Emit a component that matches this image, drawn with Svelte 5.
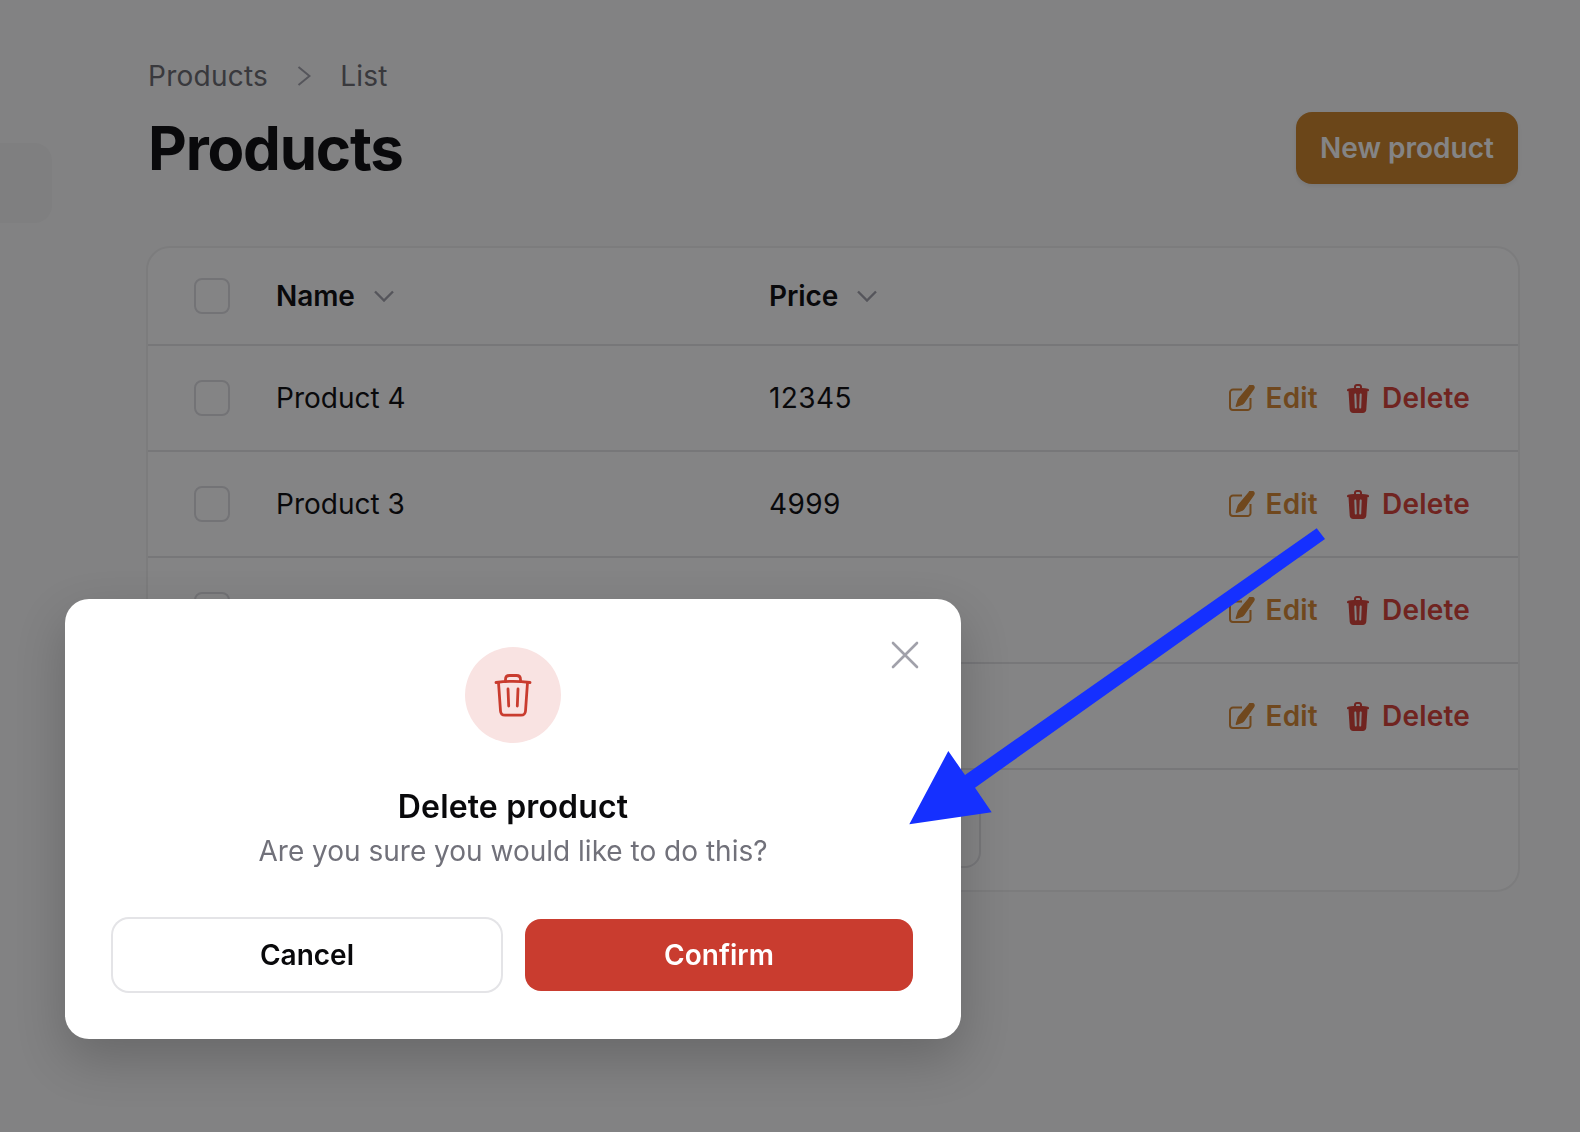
<script>
  const rows = [
    { name: 'Product 4', price: '12345' },
    { name: 'Product 3', price: '4999' },
    { name: 'Product 2', price: '2500' },
    { name: 'Product 1', price: '1000' }
  ];
</script>

<div class="page">
  <aside class="sidebar">
    <div class="toggle"></div>
  </aside>

  <main class="main">
    <nav class="crumbs">
      <span>Products</span>
      <svg class="crumb-sep" viewBox="0 0 14 20" fill="none" stroke="currentColor" stroke-width="2">
        <path d="M1.500 1l11 9-11 9" />
      </svg>
      <span>List</span>
    </nav>

    <header class="head">
      <h1>Products</h1>
      <button class="primary">New product</button>
    </header>

    <section class="card">
      <div class="row row-head">
        <span class="check"></span>
        <span class="col-name">Name
          <svg class="sort" viewBox="0 0 20 12" fill="none" stroke="currentColor" stroke-width="2.400"><path d="M1 1.500l9 9 9-9" /></svg>
        </span>
        <span class="col-price">Price
          <svg class="sort" viewBox="0 0 20 12" fill="none" stroke="currentColor" stroke-width="2.400"><path d="M1 1.500l9 9 9-9" /></svg>
        </span>
      </div>

      {#each rows as row}
        <div class="row">
          <span class="check"></span>
          <span class="col-name">{row.name}</span>
          <span class="col-price num">{row.price}</span>
          <span class="actions">
            <span class="action edit">
              <svg width="26" height="26" viewBox="0 0 26 26" fill="none">
                <path d="M13 4.500H4a3 3 0 0 0-3 3V22a3 3 0 0 0 3 3h14.500a3 3 0 0 0 3-3v-9" stroke="currentColor" stroke-width="2" />
                <path d="M19.500 1.200a3.100 3.100 0 0 1 5.800 2.900L15.300 18.300c-.4.600-1 1.100-1.700 1.400l-6 2.200c-.7.200-1.200-.3-1-1L8.500 15c.2-.6.500-1.200.9-1.700z" fill="currentColor" />
              </svg>
              Edit
            </span>
            <span class="action delete">
              <svg width="22" height="29" viewBox="0 0 22 29" fill="none">
                <path fill-rule="evenodd" d="M7 2.800C7 1.200 8.300 0 9.800 0h2.400C13.700 0 15 1.200 15 2.800V4c2.200.1 4.300.4 6 .8.600.1 1 .6 1 1.200v.4c0 .5-.4.900-.9.800l-.6-.1-1.200 18.700c-.1 1.800-1.600 3.200-3.400 3.200H6.100c-1.800 0-3.300-1.400-3.400-3.200L1.500 7.100l-.6.100C.4 7.300 0 6.900 0 6.400V6c0-.6.400-1.100 1-1.200 1.700-.4 3.800-.7 6-.8zM9 3.900h4V2.900c0-.5-.4-.9-.9-.9H9.900c-.5 0-.9.400-.9.900zM7.300 10.500l.5 13c0 .6.500 1 1 1s1-.5 1-1l-.5-13c0-.6-.5-1-1-1s-1 .5-1 1zm7.400 0c0-.6-.5-1-1-1s-1 .4-1 1l-.5 13c0 .5.400 1 1 1s1-.4 1-1z" fill="currentColor" />
              </svg>
              Delete
            </span>
          </span>
        </div>
      {/each}

      <footer class="foot">
        <div class="per-page"></div>
      </footer>
    </section>
  </main>
</div>

<div class="overlay"></div>

<div class="modal">
  <button class="close" aria-label="Close">
    <svg width="28" height="28" viewBox="0 0 28 28" fill="none" stroke="currentColor" stroke-width="2.600" stroke-linecap="round">
      <path d="M2 2l24 24M26 2L2 26" />
    </svg>
  </button>

  <div class="bubble">
    <svg width="48" height="48" viewBox="0 0 48 48" fill="none" stroke="currentColor" stroke-width="2.800" stroke-linecap="round" stroke-linejoin="round">
      <path d="M7 11.500c11-1.500 23-1.500 34 0" />
      <path d="M16.500 10.500V8.500C16.500 6 18 4.500 20.500 4.500h7C30 4.500 31.500 6 31.500 8.500v2" />
      <path d="M9.500 11.500l2 28.500c.2 2.500 2 4.200 4.500 4.200h16c2.500 0 4.300-1.700 4.500-4.200l2-28.500" />
      <path d="M19 18l.7 17M29 18l-.7 17" />
    </svg>
  </div>

  <h2>Delete product</h2>
  <p>Are you sure you would like to do this?</p>

  <div class="modal-actions">
    <button class="cancel">Cancel</button>
    <button class="confirm">Confirm</button>
  </div>
</div>

<svg class="arrow" width="1580" height="1132" viewBox="0 0 1580 1132">
  <polygon points="1316.700,528.300 1325,539 975,787.700 991.700,812.300 909.300,824.300 948.300,751 965,775" fill="#1530ff" />
</svg>

<style>
  :global(body) {
    margin: 0;
    background: #fafafa;
    font-family: Inter, "Liberation Sans", sans-serif;
  }

  .page {
    display: flex;
    min-height: 1132px;
    color: #09090b;
    background: #fafafa;
    font-size: 28px;
    line-height: 40px;
  }

  .sidebar {
    width: 146px;
    flex: none;
  }

  .toggle {
    width: 52px;
    height: 80px;
    margin-top: 143px;
    background: #f4f4f4;
    border-radius: 0 18px 18px 0;
  }

  .main {
    width: 1374px;
    padding-top: 56px;
  }

  .crumbs {
    display: flex;
    align-items: center;
    gap: 29px;
    padding-left: 2px;
    color: #68686f;
    letter-spacing: 0.25px;
  }

  .crumb-sep {
    width: 14px;
    height: 20px;
    color: #a1a1aa;
  }

  .head {
    display: flex;
    align-items: center;
    justify-content: space-between;
    margin-top: 16px;
    padding: 0 2px;
  }

  h1 {
    margin: 0;
    font-size: 60px;
    line-height: 72px;
    font-weight: 700;
    letter-spacing: -1.200px;
  }

  button {
    font-family: inherit;
    font-size: 28px;
    font-weight: 600;
    line-height: 40px;
    border: none;
    cursor: pointer;
  }

  .primary {
    width: 222px;
    height: 72px;
    color: #fff;
    background: #cc8227;
    border-radius: 16px;
    box-shadow: 0 2px 4px rgba(0, 0, 0, 0.08);
  }

  .card {
    margin-top: 62px;
    background: #fff;
    border: 2px solid #eeeeef;
    border-radius: 24px;
    box-sizing: border-box;
    height: 646px;
    overflow: hidden;
  }

  .row {
    display: flex;
    align-items: center;
    height: 106px;
    box-sizing: border-box;
    padding: 0 48px 0 46px;
    border-top: 2px solid #e4e4e7;
  }

  .row-head {
    height: 96px;
    border-top: none;
    font-weight: 600;
    letter-spacing: -0.1px;
  }

  .check {
    width: 36px;
    height: 36px;
    flex: none;
    box-sizing: border-box;
    border: 2px solid #dcdce0;
    border-radius: 8px;
    background: #fff;
  }

  .col-name {
    width: 493px;
    margin-left: 46px;
    display: flex;
    align-items: center;
    gap: 19px;
  }

  .col-price {
    display: flex;
    align-items: center;
    gap: 19px;
  }

  .num {
    letter-spacing: 0.4px;
  }

  .sort {
    width: 20px;
    height: 12px;
    color: #a1a1aa;
  }

  .actions {
    margin-left: auto;
    display: flex;
    align-items: center;
    gap: 29px;
    font-weight: 600;
    letter-spacing: 0.2px;
  }

  .action {
    display: flex;
    align-items: center;
    gap: 11px;
  }

  .edit {
    color: #d68730;
  }

  .delete {
    color: #d63f34;
    gap: 13px;
  }

  .foot {
    display: flex;
    justify-content: center;
    padding-top: 24px;
    border-top: 2px solid #e4e4e7;
  }

  .per-page {
    width: 296px;
    height: 74px;
    box-sizing: border-box;
    border: 2px solid #e4e4e7;
    border-radius: 16px;
  }

  .overlay {
    position: fixed;
    inset: 0;
    background: rgba(9, 9, 11, 0.5);
  }

  .modal {
    position: fixed;
    left: 65px;
    top: 599px;
    width: 896px;
    box-sizing: border-box;
    padding: 48px;
    background: #fff;
    border-radius: 24px;
    box-shadow: 0 20px 50px rgba(0, 0, 0, 0.2);
    display: flex;
    flex-direction: column;
    align-items: center;
    color: #09090b;
  }

  .close {
    position: absolute;
    right: 42px;
    top: 42px;
    padding: 0;
    display: flex;
    color: #a1a1aa;
    background: none;
  }

  .bubble {
    width: 96px;
    height: 96px;
    display: flex;
    align-items: center;
    justify-content: center;
    border-radius: 50%;
    color: #c93c2f;
    background: #f9e3e2;
  }

  h2 {
    margin: 44px 0 0;
    font-size: 32px;
    line-height: 40px;
    font-weight: 600;
    letter-spacing: 0.15px;
  }

  p {
    margin: 4px 0 0;
    font-size: 28px;
    line-height: 40px;
    color: #71717a;
  }

  .modal-actions {
    display: grid;
    grid-template-columns: 1fr 1fr;
    gap: 24px;
    width: 100%;
    margin-top: 48px;
  }

  .modal-actions button {
    height: 72px;
    border-radius: 16px;
  }

  .cancel {
    color: #09090b;
    background: #fff;
    box-shadow: 0 0 0 2px #e4e4e7;
  }

  .confirm {
    color: #fff;
    background: #c93c2f;
  }

  .arrow {
    position: fixed;
    left: 0;
    top: 0;
    pointer-events: none;
  }
</style>
